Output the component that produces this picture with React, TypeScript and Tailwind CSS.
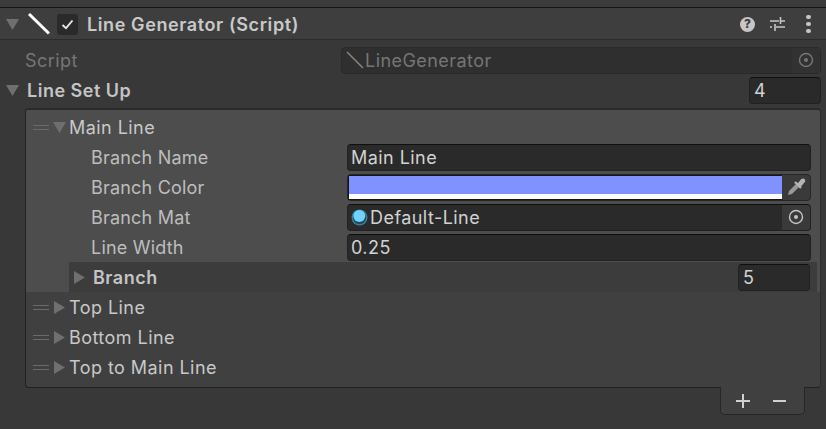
import React from "react";

const font = { fontFamily: "Inter, 'Noto Sans', sans-serif" };

function Tri({ open, className = "" }: { open?: boolean; className?: string }) {
  return (
    <svg width="13" height="13" viewBox="0 0 13 13" className={`shrink-0 ${className}`}>
      {open ? <path d="M0 1 H13 L6.5 12 Z" fill="#6f6f6f" /> : <path d="M1 0 L12 6.5 L1 13 Z" fill="#6f6f6f" />}
    </svg>
  );
}

function Handle() {
  return (
    <div className="flex flex-col gap-[3px] w-[16px] shrink-0">
      <div className="h-px bg-[#6a6a6a]" />
      <div className="h-px bg-[#6a6a6a]" />
    </div>
  );
}

function Target({ color = "#c4c4c4" }: { color?: string }) {
  return (
    <svg width="16" height="16" viewBox="0 0 16 16">
      <circle cx="8" cy="8" r="6.5" fill="none" stroke={color} strokeWidth="1.4" />
      <circle cx="8" cy="8" r="2" fill={color} />
    </svg>
  );
}

function Field({ children, className = "" }: { children: React.ReactNode; className?: string }) {
  return (
    <div className={`h-[27px] flex items-center bg-[#2a2a2a] rounded-[4px] border border-[#212121] border-t-[#0f0f0f] text-[#d2d2d2] ${className}`}>
      {children}
    </div>
  );
}

function PropRow({ label, children }: { label: string; children: React.ReactNode }) {
  return (
    <div className="h-[30px] flex items-center pl-[65px] pr-[9px]">
      <div className="w-[256px] shrink-0 text-[#bdbdbd] text-[18px] tracking-[0.2px]">{label}</div>
      <div className="flex-1 min-w-0">{children}</div>
    </div>
  );
}

function Item({ label }: { label: string }) {
  return (
    <div className="h-[30px] flex items-center pl-[7px] text-[#c8c8c8] text-[18px] tracking-[0.45px]">
      <Handle />
      <Tri className="ml-[4px] mr-[3px]" />
      <span className="pt-[1px]">{label}</span>
    </div>
  );
}

export default function App() {
  return (
    <div className="w-[826px] h-[429px] bg-[#383838] overflow-hidden flex flex-col" style={font}>
      <div className="h-[7px] bg-[#3b3b3b] shrink-0" />
      <div className="h-[33px] shrink-0 bg-[#3e3e3e] border-t border-t-[#161616] border-b border-b-[#2c2c2c] flex items-center pt-[1px] pl-[6px] pr-[15px]">
        <Tri open />
        <svg width="22" height="22" viewBox="0 0 22 22" className="ml-[9px] shrink-0">
          <path d="M1 1 L21 20.5" stroke="#fff" strokeWidth="3" />
        </svg>
        <div className="ml-[7px] w-[21px] h-[21px] rounded-[3px] bg-[#2a2a2a] flex items-center justify-center shrink-0">
          <svg width="13" height="11" viewBox="0 0 13 11">
            <path d="M1.5 6 L5 9.2 L11.5 1.5" fill="none" stroke="#e6e6e6" strokeWidth="1.9" />
          </svg>
        </div>
        <span className="ml-[9px] pt-[1px] text-[18px] font-semibold text-[#c9c9c9] tracking-[0.6px] flex-1">Line Generator (Script)</span>
        <div className="w-[15px] h-[15px] rounded-full bg-[#c6c6c6] flex items-center justify-center text-[12px] font-extrabold text-[#3e3e3e] leading-none">?</div>
        <svg width="16" height="16" viewBox="0 0 16 16" className="ml-[15px]">
          <path d="M0 5 H9 M11 5 H15 M10.5 1 V8 M0 11 H2 M6 11 H15 M5 8 V15" stroke="#c6c6c6" strokeWidth="1.6" fill="none" />
        </svg>
        <div className="ml-[20px] flex flex-col gap-[3px] w-[5px]">
          <div className="h-[4px] w-[5px] rounded-full bg-[#c6c6c6]" />
          <div className="h-[4px] w-[5px] rounded-full bg-[#c6c6c6]" />
          <div className="h-[4px] w-[5px] rounded-full bg-[#c6c6c6]" />
        </div>
      </div>

      <div className="h-[30px] shrink-0 mt-[5px] flex items-center pl-[25px] pr-[5px]">
        <span className="w-[316px] shrink-0 text-[#767676] text-[18px] tracking-[0.45px]">Script</span>
        <div className="flex-1 h-[27px] bg-[#2f2f2f] rounded-[4px] border border-[#292929] flex items-center text-[#767676] text-[18px] tracking-[0.45px]">
          <svg width="18" height="18" viewBox="0 0 18 18" className="ml-[4px] shrink-0">
            <path d="M1 1 L17 17" stroke="#888" strokeWidth="1.5" />
          </svg>
          <span className="flex-1 ml-[1px]">LineGenerator</span>
          <div className="w-[28px] h-full flex items-center justify-center bg-[#323232]">
            <Target color="#767676" />
          </div>
        </div>
      </div>

      <div className="h-[30px] shrink-0 flex items-center pl-[6px] pr-[5px]">
        <Tri open />
        <span className="ml-[8px] pt-[1px] flex-1 text-[18px] font-semibold text-[#c4c4c4] tracking-[0.5px]">Line Set Up</span>
        <Field className="w-[72px] pl-[4px] text-[18px]">4</Field>
      </div>

      <div className="mt-[3px] ml-[25px] mr-[5px] h-[280px] shrink-0 rounded-[4px] bg-[#404040] border border-[#222222] border-t-[2px] border-t-[#2a2a2a] border-r-[#2e2e2e] overflow-hidden">
        <div className="bg-[#4d4d4d] pt-[2px]">
          <div className="h-[30px] flex items-center pl-[7px] text-[#c8c8c8] text-[18px] tracking-[0.45px]">
            <Handle />
            <Tri open className="ml-[4px] mr-[3px]" />
            <span>Main Line</span>
          </div>
          <PropRow label="Branch Name">
            <Field className="pl-[3px] text-[18px] tracking-[0.45px]">Main Line</Field>
          </PropRow>
          <PropRow label="Branch Color">
            <div className="h-[27px] flex rounded-[4px] bg-[#3a3a3a] border border-[#262626]">
              <div className="flex-1 flex flex-col border-t border-l border-b border-[#161616]">
                <div className="flex-1 bg-[#8092ff]" />
                <div className="h-[5px] bg-white" />
              </div>
              <div className="w-[28px] flex items-center justify-center">
                <svg width="20" height="20" viewBox="0 0 20 20">
                  <path d="M2 18 L3 14 L10 7 L13 10 L6 17 Z" fill="#989898" />
                  <path d="M9 5 L15 11 M12 8 L16 3 Q18 2 18 4 L14 9" stroke="#b4b4b4" strokeWidth="2.4" fill="#b4b4b4" />
                </svg>
              </div>
            </div>
          </PropRow>
          <PropRow label="Branch Mat">
            <Field className="text-[18px] tracking-[0.45px]">
              <svg width="17" height="17" viewBox="0 0 17 17" className="ml-[3px] shrink-0">
                <circle cx="8.5" cy="8.5" r="8" fill="#3c7f9c" />
                <circle cx="8.5" cy="8.5" r="6.6" fill="#22465a" />
                <circle cx="8.3" cy="7" r="6" fill="#6fd2ff" />
              </svg>
              <span className="flex-1 ml-[2px]">Default-Line</span>
              <div className="w-[28px] h-full flex items-center justify-center bg-[#3a3a3a] rounded-r-[3px]">
                <Target />
              </div>
            </Field>
          </PropRow>
          <PropRow label="Line Width">
            <Field className="pl-[3px] text-[18px] tracking-[0.45px]">0.25</Field>
          </PropRow>
          <div className="h-[30px] pt-px ml-[43px] mr-[3px] bg-[#3c3c3c] flex items-center pl-[4px] pr-[7px]">
            <Tri />
            <span className="ml-[7px] flex-1 text-[18px] font-semibold text-[#c4c4c4] tracking-[0.5px]">Branch</span>
            <Field className="w-[72px] pl-[4px] text-[18px]">5</Field>
          </div>
        </div>
        <Item label="Top Line" />
        <Item label="Bottom Line" />
        <Item label="Top to Main Line" />
      </div>

      <div className="ml-[720px] w-[85px] h-[28px] shrink-0 -mt-px relative bg-[#404040] border border-t-0 border-[#262626] rounded-b-[5px] flex items-center pl-[15px] gap-[23px]">
        <svg width="14" height="14" viewBox="0 0 14 14"><path d="M0 7 H14 M7 0 V14" stroke="#d0d0d0" strokeWidth="2" /></svg>
        <svg width="14" height="14" viewBox="0 0 14 14"><path d="M0 7 H13" stroke="#d0d0d0" strokeWidth="2" /></svg>
      </div>
    </div>
  );
}
